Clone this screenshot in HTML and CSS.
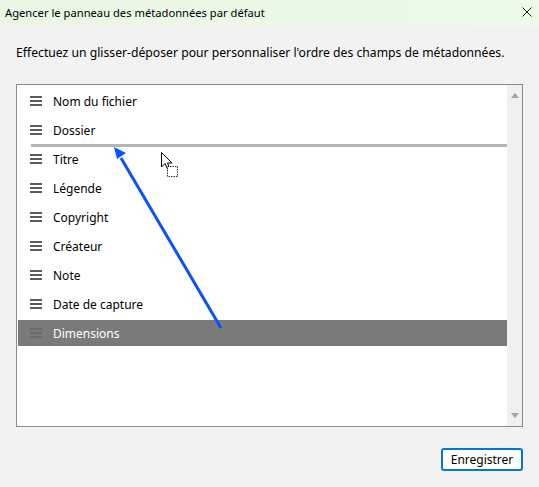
FILE: index.html
```html
<!DOCTYPE html>
<html>
    <head>
        <title>Agencer le panneau</title>
        <meta charset="UTF-8">
        <link rel="stylesheet" href="styles.css">
    </head>
    <body>
        <div class="dialog">
            <div class="titlebar">
                <span class="title">Agencer le panneau des métadonnées par défaut</span>
                <svg class="close" width="10" height="10" viewBox="0 0 10 10">
                    <path d="M0.5 0.5 L9.5 9.5 M9.5 0.5 L0.5 9.5" stroke="#1a1a1a" stroke-width="1"/>
                </svg>
            </div>
            <div class="content">
                <p class="hint">Effectuez un glisser-déposer pour personnaliser l'ordre des champs de métadonnées.</p>
                <div class="field-list">
                    <ul class="items">
                        <li class="item"><span class="grip"></span>Nom du fichier</li>
                        <li class="item drop-after"><span class="grip"></span>Dossier</li>
                        <li class="item"><span class="grip"></span>Titre</li>
                        <li class="item"><span class="grip"></span>Légende</li>
                        <li class="item"><span class="grip"></span>Copyright</li>
                        <li class="item"><span class="grip"></span>Créateur</li>
                        <li class="item"><span class="grip"></span>Note</li>
                        <li class="item"><span class="grip"></span>Date de capture</li>
                        <li class="item selected"><span class="grip"></span>Dimensions</li>
                    </ul>
                    <div class="scrollbar">
                        <span class="arrow-up"></span>
                        <span class="arrow-down"></span>
                    </div>
                </div>
                <div class="actions">
                    <button class="save-btn">Enregistrer</button>
                </div>
            </div>
        </div>

        <!-- annotation + drag cursor drawn over the dialog -->
        <svg class="overlay" width="539" height="487" viewBox="0 0 539 487">
            <line x1="221" y1="328" x2="121" y2="158" stroke="#0a50ff" stroke-width="3"/>
            <polygon points="114,147 126,153 117,159" fill="#0a50ff"/>
            <path d="M161.5 152.5 L161.5 167 L165 163.5 L168 170 L170 169 L167.5 163 L172 163 Z" fill="#fff" stroke="#000" stroke-width="1"/>
            <rect x="167.5" y="166.5" width="10" height="10" fill="#fff" stroke="#333" stroke-width="1" stroke-dasharray="1.5 1"/>
        </svg>
    </body>
</html>
```

FILE: styles.css
```css
* {
  margin: 0;
  padding: 0;
  box-sizing: border-box;
}

body {
  font-family: "Noto Sans", "Open Sans", sans-serif;
  font-size: 12px;
  color: #000;
  background-color: #f2f2f2;
  width: 539px;
  height: 487px;
  overflow: hidden;
  position: relative;
}

.titlebar {
  height: 26px;
  display: flex;
  align-items: center;
  justify-content: space-between;
  padding: 0 7px 2px 5px;
  background: linear-gradient(90deg, #e9f6e3, #eefaea);
}

.title {
  font-size: 11.2px;
}

.content {
  padding: 0 16px;
}

.hint {
  margin-top: 19px;
  font-size: 12.2px;
  line-height: 16px;
  height: 16px;
  white-space: nowrap;
}

.field-list {
  margin-top: 23px;
  height: 343px;
  width: 507px;
  border: 1px solid #8a8a8a;
  background-color: #fff;
  display: flex;
}

.items {
  list-style: none;
  flex: 1;
  padding: 3px 0 0 1px;
  display: flex;
  flex-direction: column;
  gap: 3px;
}

.item {
  height: 26px;
  display: flex;
  align-items: center;
  padding-left: 12px;
  position: relative;
}

.grip {
  width: 12px;
  height: 10px;
  margin-right: 11px;
  margin-top: -1px;
  border-top: 2px solid #5c5c5c;
  border-bottom: 2px solid #5c5c5c;
  position: relative;
}

.grip::after {
  content: "";
  position: absolute;
  left: 0;
  right: 0;
  top: 2px;
  height: 2px;
  background-color: #5c5c5c;
}

.item.selected {
  background-color: #7a7a7a;
  color: #fff;
}

.item.selected .grip {
  border-color: #6a6a6a;
}

.item.selected .grip::after {
  background-color: #6a6a6a;
}

.drop-after::after {
  content: "";
  position: absolute;
  left: 13px;
  right: 0;
  bottom: -4px;
  height: 3px;
  background-color: #b4b4b4;
}

.scrollbar {
  width: 15px;
  background-color: #f0f0f0;
  display: flex;
  flex-direction: column;
  justify-content: space-between;
  align-items: center;
  padding: 8px 0 8px;
}

.arrow-up {
  width: 0;
  height: 0;
  border-left: 4px solid transparent;
  border-right: 4px solid transparent;
  border-bottom: 5px solid #a3a3a3;
}

.arrow-down {
  width: 0;
  height: 0;
  border-left: 4px solid transparent;
  border-right: 4px solid transparent;
  border-top: 5px solid #a3a3a3;
}

.actions {
  display: flex;
  justify-content: flex-end;
  margin-top: 21px;
}

.save-btn {
  font-family: inherit;
  font-size: 12px;
  width: 82px;
  height: 23px;
  background-color: #fff;
  border: 2px solid #0078d7;
  border-radius: 3px;
  color: #000;
}

.overlay {
  position: absolute;
  top: 0;
  left: 0;
  pointer-events: none;
}
```
